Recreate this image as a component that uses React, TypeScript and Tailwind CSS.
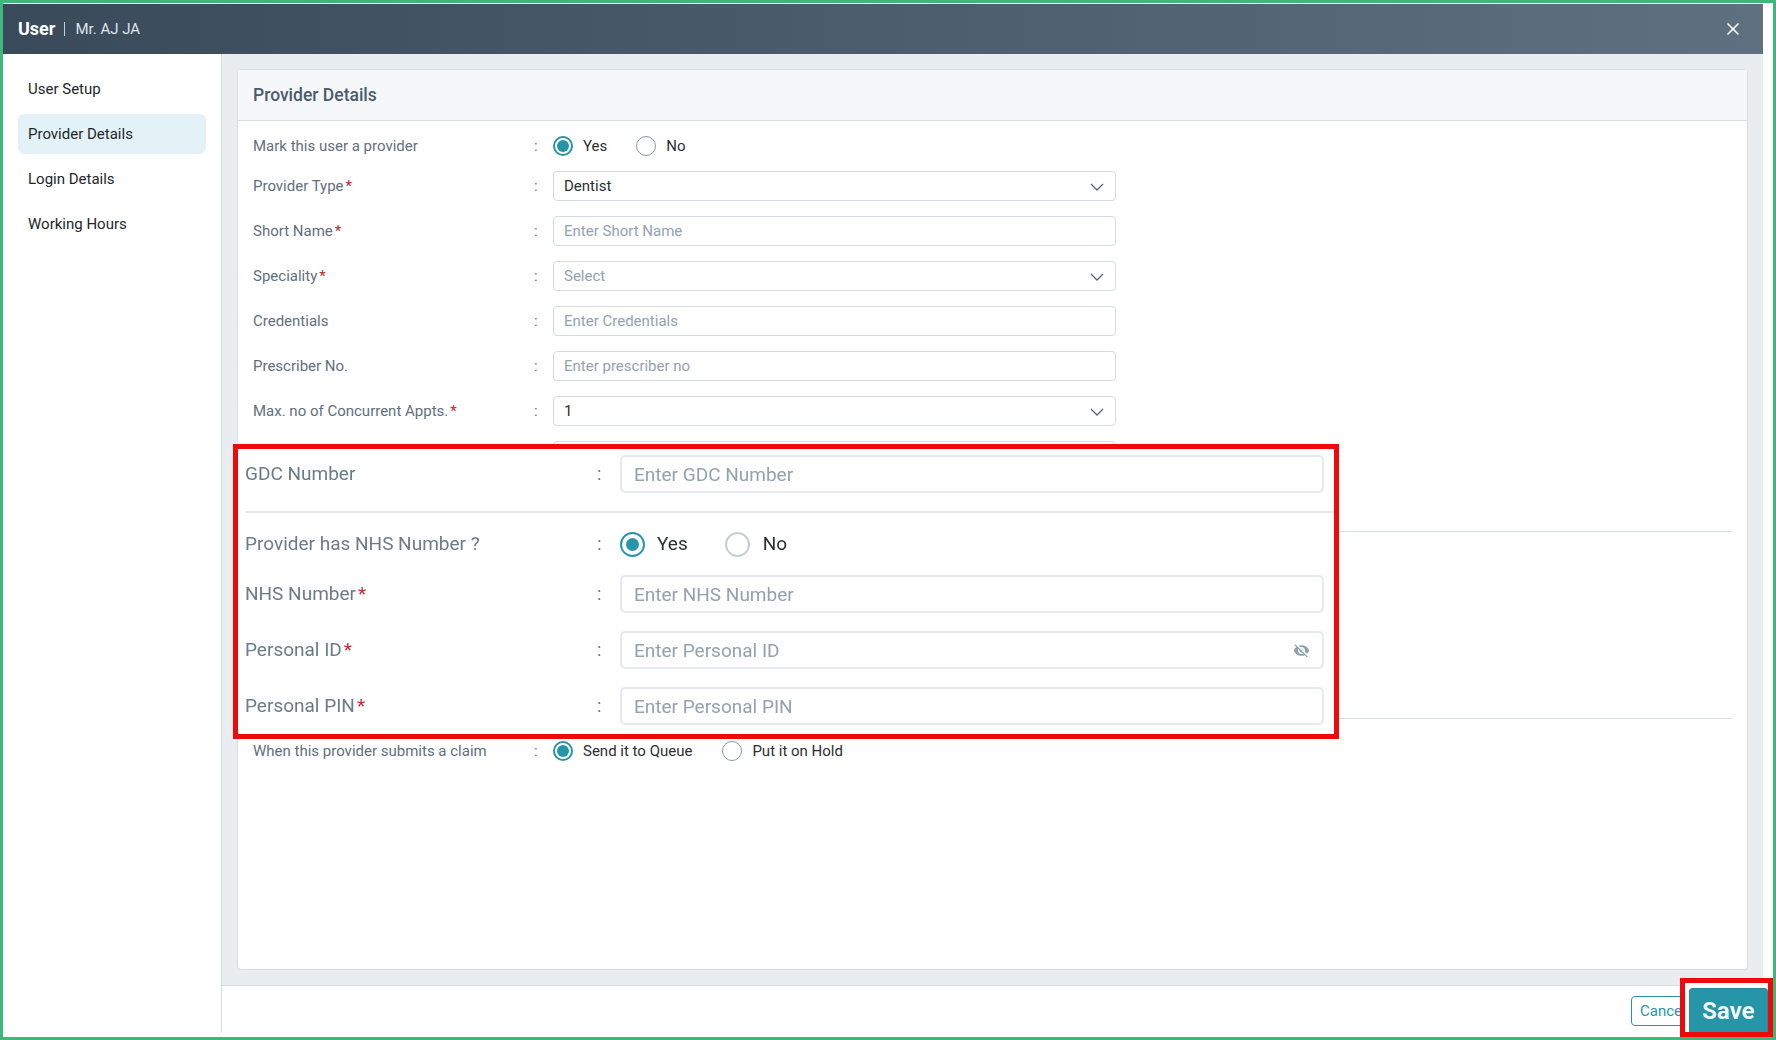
import { MdVisibilityOff } from "react-icons/md"
import { X } from "lucide-react"

const menu = ["User Setup", "Provider Details", "Login Details", "Working Hours"]

function Chevron() {
  return (
    <svg width="14" height="8" viewBox="0 0 14 8" fill="none" className="absolute right-[11px] top-[11px]">
      <path d="M1 1l6 6 6-6" stroke="#56677a" strokeWidth="1.3" />
    </svg>
  )
}

function Radio({ checked, big }: { checked?: boolean; big?: boolean }) {
  if (big) {
    return (
      <span className={`flex h-[25px] w-[25px] shrink-0 items-center justify-center rounded-full border-2 ${checked ? "border-[#2795a8]" : "border-[#c3ced6]"}`}>
        {checked && <span className="h-[13px] w-[13px] rounded-full bg-[#2795a8]" />}
      </span>
    )
  }
  return (
    <span className={`flex h-5 w-5 shrink-0 items-center justify-center rounded-full ${checked ? "border-2 border-[#2795a8]" : "border border-[#8a98a5]"}`}>
      {checked && <span className="h-3 w-3 rounded-full bg-[#2795a8]" />}
    </span>
  )
}

function Label({ text, req }: { text: string; req?: boolean }) {
  return (
    <div className="flex w-[281px] shrink-0 items-center text-[15px] text-[#5f6f80]">
      {text}
      {req && <span className="ml-[2px] text-[#c0272d]">*</span>}
    </div>
  )
}

function Row({ label, req, placeholder, value, select }: { label: string; req?: boolean; placeholder?: string; value?: string; select?: boolean }) {
  return (
    <div className="flex h-[30px] items-center">
      <Label text={label} req={req} />
      <div className="w-[19px] shrink-0 text-[15px] text-[#5f6f80]">:</div>
      <div className="relative h-[30px] w-[563px] rounded border border-[#d5dbe4] bg-white">
        <input
          readOnly
          value={value ?? ""}
          placeholder={placeholder}
          className="h-full w-full bg-transparent px-[10px] text-[15px] text-[#2b2f33] outline-none placeholder:text-[#94a2ae]"
        />
        {select && <Chevron />}
      </div>
    </div>
  )
}

function RadioRow({ label, yes, no, gap }: { label: string; yes: string; no: string; gap: string }) {
  return (
    <div className="flex h-5 items-center">
      <Label text={label} />
      <div className="w-[19px] shrink-0 text-[15px] text-[#5f6f80]">:</div>
      <div className="flex items-center text-[15px] text-[#2b2f33]">
        <Radio checked />
        <span className={`ml-[10px] ${gap}`}>{yes}</span>
        <Radio />
        <span className="ml-[10px]">{no}</span>
      </div>
    </div>
  )
}

function OverlayField({ label, req, placeholder, eye }: { label: string; req?: boolean; placeholder: string; eye?: boolean }) {
  return (
    <div className="flex h-[38px] items-center">
      <div className="flex w-[352px] shrink-0 text-[19px] text-[#6b7b88]">
        {label}
        {req && <span className="ml-[2px] text-[#c0272d]">*</span>}
      </div>
      <div className="w-[23px] shrink-0 text-[19px] text-[#6b7b88]">:</div>
      <div className="relative h-[38px] w-[704px] rounded-[5px] border-2 border-[#e6eaf0]">
        <input
          readOnly
          placeholder={placeholder}
          className="h-full w-full bg-transparent px-[12px] text-[19px] outline-none placeholder:text-[#94a2ae]"
        />
        {eye && <MdVisibilityOff className="absolute right-[12px] top-[9px] text-[#8fa0ac]" size={17} />}
      </div>
    </div>
  )
}

export default function App() {
  return (
    <div className="flex h-[1040px] w-[1776px] flex-col overflow-hidden border-[3px] border-[#3cb878] bg-white pb-1 pr-[10px] pt-px [font-family:Roboto,sans-serif]">
      {/* Title bar */}
      <div className="flex h-[50px] shrink-0 items-center bg-gradient-to-r from-[#394a5b] to-[#5f7080] pl-[15px] pr-[20px] text-white">
        <span className="text-lg font-bold">User</span>
        <span className="ml-[9px] h-[14px] w-px bg-[#c5ced6]" />
        <span className="ml-[10px] text-[15px] text-[#dfe5ea]">Mr. AJ JA</span>
        <X className="ml-auto" size={20} strokeWidth={2} />
      </div>

      <div className="flex min-h-0 flex-1">
        {/* Sidebar */}
        <div className="flex w-[219px] shrink-0 flex-col gap-[5px] border-r border-[#d6dae2] px-[15px] pt-[15px]">
          {menu.map((m) => (
            <div
              key={m}
              className={`flex h-10 items-center rounded-md pl-[10px] text-[15px] text-[#22272c] ${m === "Provider Details" ? "bg-[#e3f2f6]" : ""}`}
            >
              {m}
            </div>
          ))}
        </div>

        {/* Main */}
        <div className="flex min-w-0 flex-1 flex-col">
          <div className="min-h-0 flex-1 bg-[#e9edf0] p-[15px]">
            <div className="flex h-full flex-col rounded border border-[#d8dde3] bg-white">
              <div className="flex h-[51px] shrink-0 items-center border-b border-[#d8dde3] bg-[#f5f7f9] pl-[15px] text-[17.5px] font-medium text-[#4a5b6c]">
                Provider Details
              </div>
              <div className="flex flex-col px-[15px] pt-[15px]">
                <RadioRow label="Mark this user a provider" yes="Yes" no="No" gap="mr-[29px]" />
                <div className="mt-[15px] flex flex-col gap-[15px]">
                  <Row label="Provider Type" req value="Dentist" select />
                  <Row label="Short Name" req placeholder="Enter Short Name" />
                  <Row label="Speciality" req placeholder="Select" select />
                  <Row label="Credentials" placeholder="Enter Credentials" />
                  <Row label="Prescriber No." placeholder="Enter prescriber no" />
                  <Row label="Max. no of Concurrent Appts." req value="1" select />
                  <Row label="GDC Number" placeholder="Enter GDC Number" />
                </div>
                <div className="mt-[60px] h-px bg-[#d8dde3]" />
                <div className="mt-[186px] h-px bg-[#d8dde3]" />
                <div className="mt-[22px]">
                  <RadioRow label="When this provider submits a claim" yes="Send it to Queue" no="Put it on Hold" gap="mr-[30px]" />
                </div>
              </div>
            </div>
          </div>
          <div className="flex h-[48px] shrink-0 items-start justify-end border-t border-[#d6dae2] pr-[52px] pt-[10px]">
            <div className="flex h-[30px] w-[80px] items-center rounded border border-[#2795a8] pl-2 text-[15px] text-[#2795a8]">Cancel</div>
          </div>
        </div>
      </div>

      {/* Callout pasted over the form */}
      <div className="absolute left-[233px] top-[444px] h-[295px] w-[1106px] border-[5px] border-[#ee0a0a] bg-white">
        <div className="pl-[7px] pt-[6px] blur-[0.4px]">
          <OverlayField label="GDC Number" placeholder="Enter GDC Number" />
          <div className="mt-[18px] h-0.5 w-[1089px] bg-[#e6eaf0]" />
          <div className="mt-[19px] flex h-[25px] items-center text-[19px]">
            <div className="w-[352px] shrink-0 text-[#6b7b88]">Provider has NHS Number ?</div>
            <div className="w-[23px] shrink-0 text-[#6b7b88]">:</div>
            <Radio checked big />
            <span className="ml-[12px] mr-[37px] text-[#2b2f33]">Yes</span>
            <Radio big />
            <span className="ml-[13px] text-[#2b2f33]">No</span>
          </div>
          <div className="mt-[18px] flex flex-col gap-[18px]">
            <OverlayField label="NHS Number" req placeholder="Enter NHS Number" />
            <OverlayField label="Personal ID" req placeholder="Enter Personal ID" eye />
            <OverlayField label="Personal PIN" req placeholder="Enter Personal PIN" />
          </div>
        </div>
      </div>

      {/* Save callout */}
      <div className="absolute left-[1680px] top-[978px] h-[59px] w-[93px] border-[5px] border-[#ee0a0a] bg-white pl-1 pt-[5px]">
        <div className="flex h-[44px] w-[79px] items-center justify-center rounded-t border border-b-0 border-[#23899b] bg-[#2795a8] text-2xl font-bold text-[#eef7f9] blur-[0.5px]">
          Save
        </div>
      </div>
    </div>
  )
}
